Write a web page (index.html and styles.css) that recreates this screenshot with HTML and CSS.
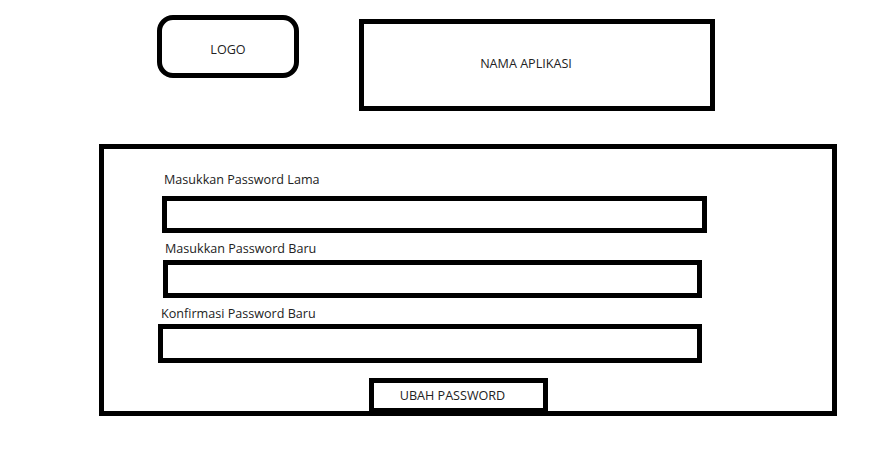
FILE: index.html
```html
<!DOCTYPE html>
<html lang="id">
<head>
  <meta charset="UTF-8">
  <title>Ubah Password</title>
  <link rel="stylesheet" href="styles.css">
</head>
<body>
  <header class="top">
    <div class="logo">LOGO</div>
    <div class="app-name">NAMA APLIKASI</div>
  </header>

  <main class="panel">
    <div class="field field-old">
      <label for="oldPass">Masukkan Password Lama</label>
      <input type="password" id="oldPass">
    </div>
    <div class="field field-new">
      <label for="newPass">Masukkan Password Baru</label>
      <input type="password" id="newPass">
    </div>
    <div class="field field-confirm">
      <label for="confirmPass">Konfirmasi Password Baru</label>
      <input type="password" id="confirmPass">
    </div>
    <button class="submit-btn">UBAH PASSWORD</button>
  </main>
</body>
</html>
```

FILE: styles.css
```css
* {
  box-sizing: border-box;
}
body {
  margin: 0;
  background: #fff;
  font-family: 'Open Sans', sans-serif;
  font-size: 12.6px;
  color: #222;
}
.top {
  display: flex;
  align-items: flex-start;
  gap: 60px;
  padding: 15px 0 0 157px;
}
.logo {
  width: 142px;
  height: 63px;
  border: 5px solid #000;
  border-radius: 16px;
  display: flex;
  align-items: center;
  justify-content: center;
  padding-top: 6px;
}
.app-name {
  width: 356px;
  height: 92px;
  margin-top: 4px;
  border: 5px solid #000;
  display: flex;
  align-items: center;
  justify-content: center;
  padding-right: 22px;
  padding-bottom: 4px;
}
.panel {
  width: 738px;
  height: 272px;
  margin: 33px 0 0 99px;
  border: 5px solid #000;
  padding-top: 23px;
}
.field {
  display: flex;
  flex-direction: column;
  margin-bottom: 8px;
}
label {
  line-height: 16px;
  margin-bottom: 8px;
}
input {
  display: block;
  height: 37px;
  border: 5px solid #000;
  border-radius: 0;
  background: #fff;
  outline: none;
}
.field-old {
  margin-left: 58px;
}
.field-old label {
  margin-left: 2px;
}
.field-old input {
  width: 545px;
}
.field-new {
  margin-left: 59px;
}
.field-new label {
  margin-left: 2px;
  margin-bottom: 3px;
}
.field-new input {
  width: 539px;
  height: 38px;
}
.field-confirm {
  margin-left: 54px;
  margin-bottom: 15px;
}
.field-confirm label {
  margin-left: 3px;
  margin-bottom: 2px;
}
.field-confirm input {
  width: 544px;
  height: 39px;
}
.submit-btn {
  display: flex;
  align-items: center;
  justify-content: center;
  width: 179px;
  height: 35px;
  margin-left: 265px;
  padding-right: 18px;
  border: 5px solid #000;
  background: #fff;
  font-family: inherit;
  font-size: 12.6px;
  color: #222;
}
```
